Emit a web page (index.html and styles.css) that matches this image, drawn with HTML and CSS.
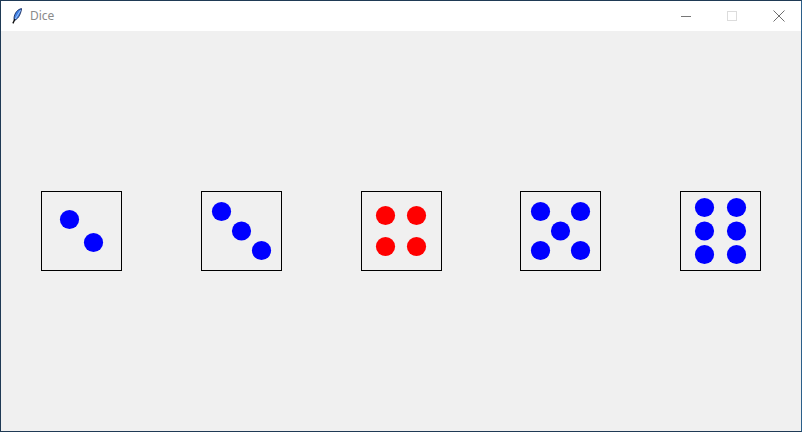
FILE: index.html
```html
<!DOCTYPE html>
<html lang="en">
<head>
    <meta charset="UTF-8">
    <title>Dice</title>
    <link rel="stylesheet" href="styles.css">
</head>
<body>
    <div class="window">
        <div class="titlebar">
            <!-- Icono de pluma de Tk -->
            <svg class="app-icon" width="10" height="16" viewBox="0 0 10 16">
                <path d="M9.6 0.6 C6 1.2 2.6 4.5 2 10 L2.2 12.5 C5.5 11.5 8.5 7.5 9.6 0.6 Z" fill="#3d7fe6" stroke="#1b2c5c" stroke-width="0.9"/>
                <path d="M8.6 2.2 L3.2 11" stroke="#b7d8ff" stroke-width="0.8"/>
                <path d="M3 11 L0.9 15.4" stroke="#111" stroke-width="1.4"/>
            </svg>
            <span class="title">Dice</span>
            <div class="controls">
                <span class="ctl minimize"><i></i></span>
                <span class="ctl maximize"><i></i></span>
                <span class="ctl close">
                    <svg width="12" height="12" viewBox="0 0 12 12">
                        <path d="M0.5 0.5 L11.5 11.5 M11.5 0.5 L0.5 11.5" stroke="#6e6e6e" stroke-width="1"/>
                    </svg>
                </span>
            </div>
        </div>

        <div class="canvas">
            <div class="die">
                <svg viewBox="0 0 81 80" width="81" height="80">
                    <rect x="0.5" y="0.5" width="80" height="79" class="face"/>
                    <circle cx="28.5" cy="28.5" r="9.6" class="pip"/>
                    <circle cx="52.5" cy="51.5" r="9.6" class="pip"/>
                </svg>
            </div>
            <div class="die">
                <svg viewBox="0 0 81 80" width="81" height="80">
                    <rect x="0.5" y="0.5" width="80" height="79" class="face"/>
                    <circle cx="20.5" cy="20.5" r="9.6" class="pip"/>
                    <circle cx="40.5" cy="40" r="9.6" class="pip"/>
                    <circle cx="60.5" cy="59.5" r="9.6" class="pip"/>
                </svg>
            </div>
            <div class="die">
                <svg viewBox="0 0 81 80" width="81" height="80">
                    <rect x="0.5" y="0.5" width="80" height="79" class="face"/>
                    <circle cx="24.5" cy="24.5" r="9.6" class="pip red"/>
                    <circle cx="55.5" cy="24.5" r="9.6" class="pip red"/>
                    <circle cx="24.5" cy="55.5" r="9.6" class="pip red"/>
                    <circle cx="55.5" cy="55.5" r="9.6" class="pip red"/>
                </svg>
            </div>
            <div class="die shift">
                <svg viewBox="0 0 81 80" width="81" height="80">
                    <rect x="0.5" y="0.5" width="80" height="79" class="face"/>
                    <circle cx="20.5" cy="20.5" r="9.6" class="pip"/>
                    <circle cx="60.5" cy="20.5" r="9.6" class="pip"/>
                    <circle cx="40.5" cy="40" r="9.6" class="pip"/>
                    <circle cx="20.5" cy="59.5" r="9.6" class="pip"/>
                    <circle cx="60.5" cy="59.5" r="9.6" class="pip"/>
                </svg>
            </div>
            <div class="die">
                <svg viewBox="0 0 81 80" width="81" height="80">
                    <rect x="0.5" y="0.5" width="80" height="79" class="face"/>
                    <circle cx="24.5" cy="16.5" r="9.6" class="pip"/>
                    <circle cx="56.5" cy="16.5" r="9.6" class="pip"/>
                    <circle cx="24.5" cy="40" r="9.6" class="pip"/>
                    <circle cx="56.5" cy="40" r="9.6" class="pip"/>
                    <circle cx="24.5" cy="63.5" r="9.6" class="pip"/>
                    <circle cx="56.5" cy="63.5" r="9.6" class="pip"/>
                </svg>
            </div>
        </div>
    </div>
</body>
</html>
```

FILE: styles.css
```css
body {
    margin: 0;
    font-family: "Noto Sans", "Open Sans", sans-serif;
    background: #f0f0f0;
}

.window {
    width: 802px;
    height: 432px;
    box-sizing: border-box;
    border: 1px solid #1f3a55;
    border-right-color: #2b5f8a;
    display: flex;
    flex-direction: column;
    background: #f0f0f0;
}

.titlebar {
    height: 30px;
    background: #ffffff;
    display: flex;
    align-items: center;
    flex-shrink: 0;
}

.app-icon {
    margin-left: 11px;
    margin-top: -1px;
}

.title {
    margin-left: 8px;
    font-size: 12px;
    color: #8a8a8a;
    margin-top: -1px;
}

.controls {
    margin-left: auto;
    display: flex;
    height: 100%;
}

.ctl {
    width: 46px;
    height: 100%;
    display: flex;
    align-items: center;
    justify-content: center;
}

.minimize i {
    display: block;
    width: 10px;
    height: 1px;
    background: #777777;
}

.maximize i {
    display: block;
    width: 10px;
    height: 10px;
    border: 1px solid #dcdcdc;
    box-sizing: border-box;
}

.close svg {
    display: block;
    margin-left: 2px;
}

.canvas {
    flex: 1;
    display: flex;
    align-items: center;
    padding-left: 40px;
    gap: 79px;
}

/* los dos ultimos dados van 1px mas a la izquierda */
.die.shift {
    margin-left: -1px;
}

.die svg {
    display: block;
}

.face {
    fill: none;
    stroke: #000000;
    stroke-width: 1;
    shape-rendering: crispEdges;
}

.pip {
    fill: #0000ff;
}

.pip.red {
    fill: #ff0000;
}
```
